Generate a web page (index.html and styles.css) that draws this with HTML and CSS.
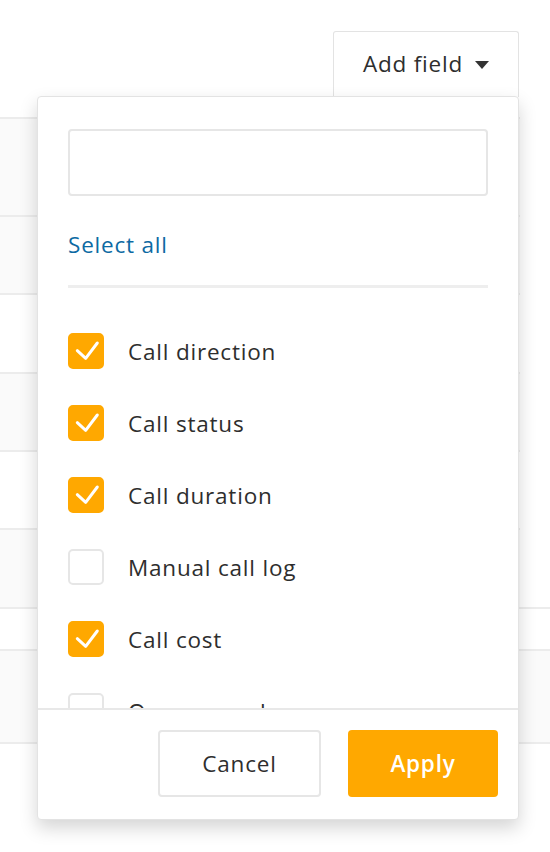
FILE: index.html
```html
<!DOCTYPE html>
<html>
<head>
<meta charset="utf-8">
<link rel="stylesheet" href="styles.css">
</head>
<body>
<div class="page">
  <div class="toolbar">
    <button class="add-field">Add field <span class="caret"></span></button>
  </div>
  <div class="table">
    <div class="row r1 shade"></div>
    <div class="row r2 shade"></div>
    <div class="row r3"></div>
    <div class="row r4 shade"></div>
    <div class="row r5"></div>
    <div class="row r6 shade"></div>
    <div class="row r7 full"></div>
    <div class="row r8 full shade"></div>
  </div>

  <div class="dropdown">
    <div class="dd-body">
      <input class="search" type="text">
      <a class="select-all">Select all</a>
      <div class="divider"></div>
      <div class="list">
        <label class="item"><span class="box checked"><svg viewBox="0 0 36 36"><path d="M9.3 17.7 L17.7 25.3 L29.3 10" /></svg></span><span class="label">Call direction</span></label>
        <label class="item"><span class="box checked"><svg viewBox="0 0 36 36"><path d="M9.3 17.7 L17.7 25.3 L29.3 10" /></svg></span><span class="label">Call status</span></label>
        <label class="item"><span class="box checked"><svg viewBox="0 0 36 36"><path d="M9.3 17.7 L17.7 25.3 L29.3 10" /></svg></span><span class="label">Call duration</span></label>
        <label class="item"><span class="box"></span><span class="label">Manual call log</span></label>
        <label class="item"><span class="box checked"><svg viewBox="0 0 36 36"><path d="M9.3 17.7 L17.7 25.3 L29.3 10" /></svg></span><span class="label">Call cost</span></label>
        <label class="item"><span class="box"></span><span class="label">Owner number</span></label>
      </div>
    </div>
    <div class="dd-footer">
      <button class="btn cancel">Cancel</button>
      <button class="btn apply">Apply</button>
    </div>
  </div>
</div>
</body>
</html>
```

FILE: styles.css
```css
* { box-sizing: border-box; }
html, body { margin: 0; padding: 0; background: #fff; }
body { font-family: "Open Sans", Lato, sans-serif; color: #2e2e2e; letter-spacing: 0.8px; }
.page { position: relative; width: 550px; height: 852px; overflow: hidden; }

.toolbar { display: flex; justify-content: flex-end; padding: 31px 31px 0 0; height: 97px; }
.add-field {
  width: 186px; height: 66px;
  background: #fff; border: 1.5px solid #e3e3e3; border-bottom: none;
  border-radius: 3px 3px 0 0;
  font-family: inherit; font-size: 22.5px; color: #2e2e2e; letter-spacing: 0.8px;
  display: flex; align-items: center; justify-content: center; gap: 12px;
  padding: 0 0 2px 0;
}
.caret { width: 0; height: 0; border-left: 7px solid transparent; border-right: 7px solid transparent; border-top: 8px solid #333; margin-top: 2px; }

.table { padding-top: 20px; }
.row { width: 520px; border-top: 2px solid #ececec; }
.row.full { width: 550px; }
.shade { background: #fafafa; }
.r1 { height: 98px; }
.r2 { height: 78px; }
.r3 { height: 79px; }
.r4 { height: 78px; }
.r5 { height: 78px; }
.r6 { height: 79px; }
.r7 { height: 42px; }
.r8 { height: 95px; border-bottom: 2px solid #ececec; }

.dropdown {
  position: absolute; left: 37px; top: 96px; width: 482px; height: 724px;
  background: #fff; border: 1.5px solid #e3e3e3; border-radius: 4px;
  box-shadow: 0 8px 18px rgba(0,0,0,0.17);
  display: flex; flex-direction: column;
}
.dd-body { padding: 32px 30px 0 30px; height: 613px; overflow: hidden; display: flex; flex-direction: column; border-bottom: 2px solid #e8e8e8; flex: none; }
.search { width: 420px; height: 67px; border: 2px solid #e6e6e6; border-radius: 4px; flex: none; }
.select-all { color: #0d6aa3; font-size: 22.5px; margin-top: 34px; line-height: 30px; height: 30px; }
.divider { height: 3px; background: #eeeeee; margin-top: 25px; width: 420px; flex: none; }
.list { padding-top: 27px; }
.item { display: flex; align-items: center; height: 72px; gap: 24px; }
.box { width: 36px; height: 36px; border: 2px solid #e6e6e6; border-radius: 5px; flex: none; background: #fff; }
.box.checked { background: #ffa800; border-color: #ffa800; }
.box svg { display: block; width: 36px; height: 36px; margin: -2px; }
.box path { fill: none; stroke: #fff; stroke-width: 3; stroke-linecap: round; stroke-linejoin: round; }
.label { font-size: 22.5px; color: #2e2e2e; line-height: 30px; white-space: nowrap; padding-top: 2px; }

.dd-footer { display: flex; justify-content: flex-end; gap: 27px; padding: 20px 20px 0 0; }
.btn { height: 67px; border-radius: 4px; font-family: inherit; font-size: 22.5px; letter-spacing: 0.8px; }
.cancel { width: 163px; background: #fff; border: 2px solid #e6e6e6; color: #2e2e2e; }
.apply { width: 150px; background: #ffa800; border: none; color: #fff; font-weight: 600; }
```
